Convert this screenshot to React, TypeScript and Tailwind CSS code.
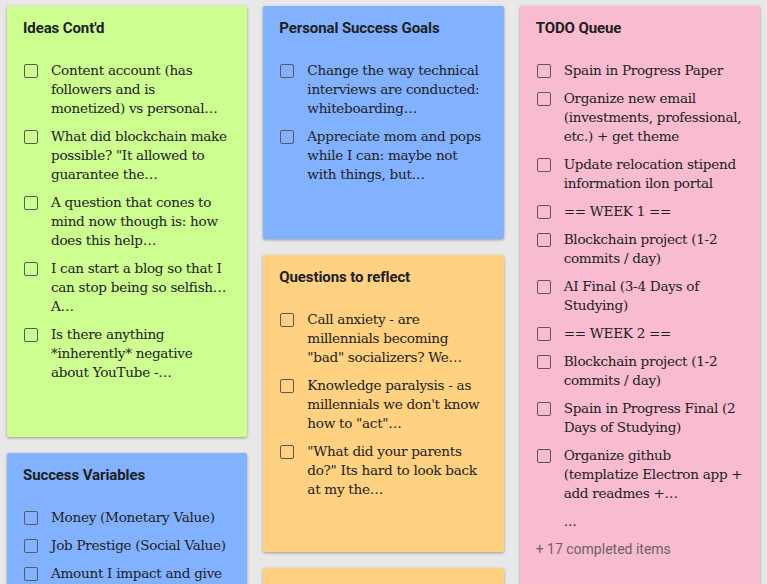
import React from "react";

type Note = {
  title: string;
  color: string;
  h?: string;
  items: string[][];
  extra?: boolean;
};

const col1: Note[] = [
  {
    title: "Ideas Cont'd",
    color: "bg-[#ccff90]",
    h: "h-[431px]",
    items: [
      ["Content account (has", "followers and is", "monetized) vs personal…"],
      ["What did blockchain make", "possible? \"It allowed to", "guarantee the…"],
      ["A question that cones to", "mind now though is: how", "does this help…"],
      ["I can start a blog so that I", "can stop being so selfish…", "A…"],
      ["Is there anything", "*inherently* negative", "about YouTube -…"],
    ],
  },
  {
    title: "Success Variables",
    color: "bg-[#82b1ff]",
    h: "h-[300px]",
    items: [
      ["Money (Monetary Value)"],
      ["Job Prestige (Social Value)"],
      ["Amount I impact and give"],
    ],
  },
];

const col2: Note[] = [
  {
    title: "Personal Success Goals",
    color: "bg-[#82b1ff]",
    h: "h-[233px]",
    items: [
      ["Change the way technical", "interviews are conducted:", "whiteboarding…"],
      ["Appreciate mom and pops", "while I can: maybe not", "with things, but…"],
    ],
  },
  {
    title: "Questions to reflect",
    color: "bg-[#ffd180]",
    h: "h-[297px]",
    items: [
      ["Call anxiety - are", "millennials becoming", "\"bad\" socializers? We…"],
      ["Knowledge paralysis - as", "millennials we don't know", "how to \"act\"…"],
      ["\"What did your parents", "do?\" Its hard to look back", "at my the…"],
    ],
  },
  {
    title: "",
    color: "bg-[#ffd180]",
    h: "h-[200px]",
    items: [],
  },
];

const col3: Note[] = [
  {
    title: "TODO Queue",
    color: "bg-[#f8bbd0]",
    h: "h-[640px]",
    extra: true,
    items: [
      ["Spain in Progress Paper"],
      ["Organize new email", "(investments, professional,", "etc.) + get theme"],
      ["Update relocation stipend", "information ilon portal"],
      ["== WEEK 1 =="],
      ["Blockchain project (1-2", "commits / day)"],
      ["AI Final (3-4 Days of", "Studying)"],
      ["== WEEK 2 =="],
      ["Blockchain project (1-2", "commits / day)"],
      ["Spain in Progress Final (2", "Days of Studying)"],
      ["Organize github", "(templatize Electron app +", "add readmes +…"],
    ],
  },
];

function Check() {
  return (
    <div className="mt-[3px] h-[14px] w-[14px] shrink-0 rounded-[2px] border-[1.5px] border-[#5a5a5a]" />
  );
}

function Card({ note }: { note: Note }) {
  return (
    <div
      className={`${note.color} ${note.h} shrink-0 rounded-[2px] px-4 pt-[10px] shadow-[0_1px_3px_rgba(0,0,0,0.35)]`}
    >
      {note.title && (
        <div className="font-['Roboto'] text-[15px] font-bold leading-[24px] tracking-[-0.1px] text-[#202020]">
          {note.title}
        </div>
      )}
      <div className="mt-[21px] flex flex-col gap-[9px]">
        {note.items.map((lines, i) => (
          <div key={i} className="flex items-start gap-[13px] pl-px">
            <Check />
            <div className="font-['DejaVu_Serif'] text-[13.6px] leading-[19px] tracking-[-0.3px] text-[#222]">
              {lines.map((l, j) => (
                <div key={j} className="whitespace-nowrap">
                  {l}
                </div>
              ))}
            </div>
          </div>
        ))}
      </div>
      {note.extra && (
        <>
          <div className="mt-[9px] pl-[28px] font-['DejaVu_Serif'] text-[13px] leading-[19px] text-[#222]">
            …
          </div>
          <div className="mt-[9px] font-['Roboto'] text-[14px] leading-[19px] text-[#6f6168]">
            + 17 completed items
          </div>
        </>
      )}
    </div>
  );
}

export default function App() {
  return (
    <div className="h-[584px] w-[767px] overflow-hidden bg-[#e8e8e8] px-[7px] pt-[6px]">
      <div className="grid grid-cols-3 gap-4">
        {[col1, col2, col3].map((col, ci) => (
          <div key={ci} className="flex flex-col gap-4">
            {col.map((n, i) => (
              <Card key={i} note={n} />
            ))}
          </div>
        ))}
      </div>
    </div>
  );
}
